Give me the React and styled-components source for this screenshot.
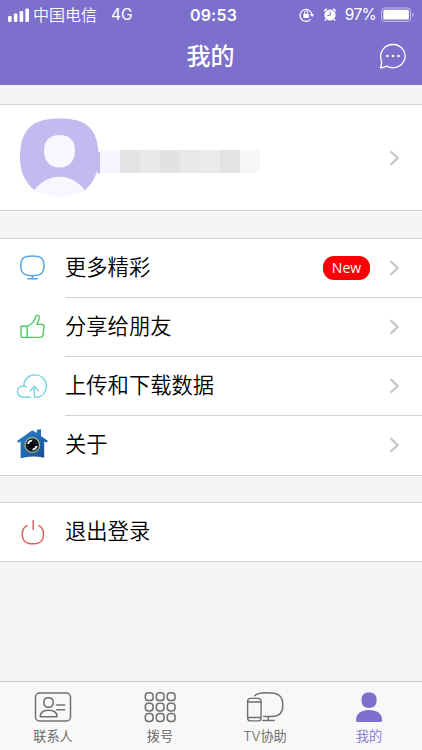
import React from "react";
import styled, { createGlobalStyle } from "styled-components";

const purple = "#7c70cc";
const line = "#d2d2d4";

const GlobalStyle = createGlobalStyle`
  * {
    box-sizing: border-box;
  }
  body {
    margin: 0;
    background: #f5f5f6;
    font-family: "Inter", "Noto Sans CJK SC", sans-serif;
  }
  svg {
    display: block;
    flex: none;
    fill: none;
  }
`;

const Screen = styled.div`
  display: flex;
  flex-direction: column;
  width: 422px;
  height: 750px;
  overflow: hidden;
`;

const Header = styled.header`
  height: 85px;
  flex: none;
  background: ${purple};
  color: #fff;
`;

const StatusBar = styled.div`
  display: grid;
  grid-template-columns: 1fr auto 1fr;
  align-items: center;
  height: 28px;
  padding: 0 7px 0 8px;
  line-height: 28px;
  font-size: 16px;
`;

const StatusLeft = styled.div`
  display: flex;
  align-items: center;
`;

const Carrier = styled.span`
  margin: -1px 14px 0 3px;
  font-family: "Noto Sans CJK SC", sans-serif;
  font-weight: 350;
`;

const Network = styled.span`
  padding-top: 1px;
  font-size: 15.5px;
  font-weight: 400;
`;

const Time = styled.span`
  padding-left: 4px;
  font-size: 16px;
  font-weight: 600;
  letter-spacing: 0.2px;
`;

const StatusRight = styled.div`
  display: flex;
  align-items: center;
  justify-content: flex-end;
`;

const Percent = styled.span`
  margin: 0 5px 0 8px;
  padding-top: 1px;
  font-size: 15.5px;
  letter-spacing: -0.7px;
`;

const NavBar = styled.div`
  display: grid;
  grid-template-columns: 1fr auto 1fr;
  align-items: center;
  height: 56px;
  padding-right: 15px;

  svg {
    justify-self: end;
  }
`;

const Title = styled.h1`
  grid-column: 2;
  margin: -2px 0 0 14px;
  font-family: "Noto Sans CJK SC", sans-serif;
  font-size: 24px;
  font-weight: 500;
  line-height: 56px;
`;

const Panel = styled.section`
  flex: none;
  margin-top: ${(props) => props.$gap}px;
  background: #fff;
  border-top: 1px solid ${line};
  border-bottom: 1px solid ${line};
`;

const Profile = styled.div`
  display: flex;
  align-items: center;
  height: 105px;
  padding: 0 21px 0 20px;
`;

const Mosaic = styled.div`
  display: flex;
  flex: 1;
  margin-top: 8px;
`;

const Block = styled.i`
  width: 20px;
  height: 23px;
  background: ${(props) => props.$color};
`;

const Row = styled.div`
  display: flex;
  align-items: center;
  height: ${(props) => props.$height || 59}px;
  padding-left: 16px;

  > svg {
    margin-top: -1px;
  }
`;

const RowBody = styled.div`
  display: flex;
  flex: 1;
  align-items: center;
  align-self: stretch;
  margin-left: 17px;
  padding-right: 21px;
  border-bottom: ${(props) => (props.$last ? "none" : `1px solid ${line}`)};
`;

const Label = styled.span`
  flex: 1;
  margin-top: -4px;
  color: #000;
  font-family: "Noto Sans CJK SC", sans-serif;
  font-size: 21.3px;
  font-weight: 350;
  line-height: 30px;
`;

const Badge = styled.span`
  width: 47px;
  height: 24px;
  margin-right: 17px;
  border-radius: 11px;
  background: #fb0006;
  color: #fff;
  font-family: "Open Sans", sans-serif;
  font-size: 14px;
  line-height: 24px;
  text-align: center;
`;

const TabBar = styled.nav`
  display: grid;
  grid-template-columns: 106px 108px 102px 106px;
  height: 69px;
  flex: none;
  margin-top: auto;
  border-top: 1px solid #c9c9c9;
  background: #f8f8f8;
`;

const Tab = styled.div`
  display: flex;
  flex-direction: column;
  align-items: center;
  padding-top: 8px;
  color: ${(props) => (props.$active ? purple : "#606060")};
  font-family: "Inter", "Noto Sans CJK SC", sans-serif;
  font-size: 13.2px;
  font-weight: 350;
  line-height: 20px;

  svg {
    margin-bottom: 2px;
  }
`;

const Signal = () => (
  <svg width="22" height="14" viewBox="0 0 22 14" fill="none">
    <g fill="#fff">
      <rect x="0" y="8" width="3.6" height="6" rx="1.2" />
      <rect x="5.8" y="5.5" width="3.6" height="8.5" rx="1.2" />
      <rect x="11.6" y="3" width="3.6" height="11" rx="1.2" />
      <rect x="17.4" y="0.5" width="3.6" height="13.5" rx="1.2" />
    </g>
  </svg>
);

const RotationLock = () => (
  <svg width="16" height="16" viewBox="0 0 16 16">
    <path d="M11.6 12.3A6 6 0 1 1 13 8" stroke="#fff" strokeWidth="1.2" />
    <path d="M10.8 7.3h4.6L13.1 10z" fill="#fff" />
    <rect x="4.4" y="6.7" width="5.4" height="4.4" rx="0.6" fill="#fff" />
    <path d="M5.5 7V5.6a1.6 1.6 0 0 1 3.2 0V7" stroke="#fff" strokeWidth="1" />
  </svg>
);

const AlarmSvg = styled.svg`
  margin-left: 8px;
`;

const Alarm = () => (
  <AlarmSvg width="14" height="16" viewBox="0 0 14 16">
    <circle cx="7" cy="8" r="5.6" fill="#fff" />
    <path d="M1.4 4.4A3 3 0 0 1 4 2M12.6 4.4A3 3 0 0 0 10 2" stroke="#fff" strokeWidth="1.6" />
    <path d="M2.9 12.2l-1 1.5M11.1 12.2l1 1.5" stroke="#fff" strokeWidth="1.5" />
    <path d="M7.2 4.5V8.3H4.3" stroke={purple} strokeWidth="1" />
  </AlarmSvg>
);

const Battery = () => (
  <svg width="34" height="16" viewBox="0 0 34 16">
    <rect x="0.6" y="1" width="29" height="13.4" rx="3.2" stroke="#fff" strokeOpacity="0.55" />
    <rect x="2.3" y="2.8" width="25.6" height="9.8" rx="1.6" fill="#fff" />
    <path d="M31.3 5.5v4.6c1.7-.7 1.7-3.9 0-4.6z" fill="#fff" fillOpacity="0.6" />
  </svg>
);

const Message = () => (
  <svg width="28" height="28" viewBox="0 0 28 28">
    <path
      d="M2 16.8A12.2 11.6 0 1 1 7.7 24.1C5.8 25.1 3.6 25.7 1.4 25.8C2.6 23.2 3 20.4 2 16.8z"
      stroke="#fff"
      strokeWidth="1.3"
      strokeLinejoin="round"
    />
    <g fill="#fff">
      <circle cx="8.4" cy="14" r="1.3" />
      <circle cx="14" cy="14" r="1.3" />
      <circle cx="19.6" cy="14" r="1.3" />
    </g>
  </svg>
);

const Avatar = () => (
  <svg width="80" height="80" viewBox="0 0 80 80">
    <path
      d="M40 .5C67 .5 78.5 11 78.5 39.5C78.5 54 74 64 65 72Q40 79 14 72C5 64 0 54 0 40C0 11 12 .5 40 .5z"
      fill="#c3baf0"
    />
    <path
      d="M39.5 17C49 17 55 22 55 33C55 43 49 49.5 39.5 49.5C30 49.5 24 43 24 33C24 22 30 17 39.5 17z"
      fill="#f8f7ff"
    />
    <path d="M14 72.5C27 54 52 54 65 72.5Q40 86 14 72.5z" fill="#f8f7ff" />
    <path d="M77 34h3v22l-3-1z" fill="#c3baf0" />
  </svg>
);

const Chevron = () => (
  <svg width="14" height="18" viewBox="0 0 14 18">
    <path d="M3.6 2.2L10.6 9L3.6 15.8" stroke="#c5c5ca" strokeWidth="2.3" />
  </svg>
);

const Monitor = () => (
  <svg width="32" height="33" viewBox="0 0 32 33">
    <g stroke="#58a5e4" strokeWidth="1.5">
      <path d="M16.3 4.9C25 4.9 28 7.2 28 14.6C28 22.3 25 24.7 16.3 24.7C7.8 24.7 4.8 22.3 4.8 14.6C4.8 7.2 7.8 4.9 16.3 4.9z" />
      <path d="M16.4 24.7v3M11.2 27.8h10.6" />
    </g>
  </svg>
);

const Thumb = () => (
  <svg width="32" height="33" viewBox="0 0 32 33">
    <g stroke="#4bcb62" strokeWidth="1.4" strokeLinejoin="round">
      <path d="M5 16.2h6.2v11.2H6.4Q5 27.4 5 26z" />
      <path d="M11.2 16.4C15.5 15 19 10.5 19.8 6.4C20.2 4.6 22.9 4.6 23.2 6.9C23.5 9.3 22.1 12 20.8 14.4H25.6Q28.4 14.4 28 17.1L27 25Q26.6 27.4 24.2 27.4H11.2" />
    </g>
  </svg>
);

const CloudUpload = () => (
  <svg width="32" height="33" viewBox="0 0 32 33">
    <g stroke="#75d4e2" strokeWidth="1.4" strokeLinecap="round">
      <path d="M14 28.3H7.5C3.8 28.3 1.4 25.7 1.4 22.6C1.4 19.3 4 17 7.2 17C8.3 17 9.4 17.3 10.4 18.1" />
      <path d="M7.7 16.8C7.8 10.5 12.7 5.9 18.9 5.9C25.8 5.9 30.5 11 30.5 17C30.5 23 26.2 28.3 20.2 28.3Q18.3 28.3 18.3 26.4V18" />
      <path d="M14.1 21.7L18.3 17.5L22.5 21.7" />
    </g>
  </svg>
);

const House = () => (
  <svg width="32" height="33" viewBox="0 0 32 33">
    <defs>
      <linearGradient id="wall" x1="0" y1="0" x2="1" y2="1">
        <stop offset="0" stopColor="#2b83cf" />
        <stop offset="0.55" stopColor="#1f67b0" />
        <stop offset="1" stopColor="#174a8c" />
      </linearGradient>
    </defs>
    <path
      d="M1 13L16.3 2.2L20.8 5V1.8L25 1.2V8L32 13L30.5 14.5L28.2 13.4V29.7Q16 27.3 4.6 30.2V13.8L2.3 14.8z"
      fill="url(#wall)"
    />
    <circle cx="16.3" cy="17" r="7.3" fill="#111725" stroke="#b2b678" strokeWidth="1.2" />
    <circle cx="16.3" cy="17" r="3.5" fill="#08090e" />
    <path d="M11 16C11.5 13 13.8 11.5 16.7 11.7L15.2 13.9L13.8 14.3L13.3 16z" fill="#e8f1f6" />
    <path d="M21.6 18C21.1 21 18.8 22.5 15.9 22.3L17.4 20.1L18.8 19.7L19.3 18z" fill="#e8f1f6" />
  </svg>
);

const Power = () => (
  <svg width="32" height="33" viewBox="0 0 32 33">
    <g stroke="#dd625f" strokeWidth="1.5" strokeLinecap="round">
      <path d="M17.2 5.4v9.2" />
      <path d="M11 10.6C7.8 12.2 6.3 15 6.3 19C6.3 26 9.5 28.8 16.9 28.8C24.3 28.8 27.5 26 27.5 19C27.5 15 26 12.2 23 10.6" />
    </g>
  </svg>
);

const ContactIcon = () => (
  <svg width="38" height="34" viewBox="0 0 38 34">
    <g stroke="#707070" strokeWidth="1.5">
      <rect x="1.5" y="3" width="35" height="28" rx="4" />
      <path d="M14.4 7.7C17.7 7.7 19.2 9.3 19.2 12.3C19.2 15.4 17.6 17.3 14.4 17.3C11.3 17.3 9.8 15.4 9.8 12.3C9.8 9.3 11.3 7.7 14.4 7.7z" />
      <path d="M6.3 26.8C6.3 22 10 20.3 14.5 20.3C19.2 20.3 23 22 23 26.8z" strokeLinejoin="round" />
      <path d="M22.2 14.9h9M22.2 19.8h9" />
    </g>
  </svg>
);

const DialIcon = () => (
  <svg width="34" height="34" viewBox="0 0 34 34">
    <g stroke="#707070" strokeWidth="1.5">
      {[6.7, 17.1, 27.5].map((y) =>
        [6.2, 17.2, 28.2].map((x) => (
          <rect key={`${x}-${y}`} x={x - 3.9} y={y - 3.9} width="7.8" height="7.8" rx="3.2" />
        ))
      )}
    </g>
  </svg>
);

const TvIcon = () => (
  <svg width="40" height="34" viewBox="0 0 40 34">
    <g stroke="#707070" strokeWidth="1.4">
      <rect x="2.6" y="8.4" width="13.5" height="22.5" rx="3" />
      <path d="M2.6 12h13.5M2.6 27.5h13.5" />
      <path d="M9.5 6.3C10.8 3.6 15 2.8 21.5 2.8C32.5 2.8 37.8 4.8 37.8 15.2C37.8 23.5 34 26.5 27 26.5H18.2" />
      <path d="M23.3 26.5v4M17.2 30.5h12.5" />
    </g>
  </svg>
);

const MineIcon = () => (
  <svg width="34" height="34" viewBox="0 0 34 34">
    <g fill={purple}>
      <path d="M17 2.4C22 2.4 24.6 5 24.6 9.9C24.6 15 22 17.9 17 17.9C12 17.9 9.5 15 9.5 9.9C9.5 5 12 2.4 17 2.4z" />
      <path d="M4 30.3C4 23.5 9.5 20.1 17 20.1C24.6 20.1 30.1 23.5 30.1 30.3Q30.1 32 28.4 32H5.7Q4 32 4 30.3z" />
    </g>
  </svg>
);

const menu = [
  { label: "更多精彩", icon: <Monitor />, badge: "New" },
  { label: "分享给朋友", icon: <Thumb /> },
  { label: "上传和下载数据", icon: <CloudUpload /> },
  { label: "关于", icon: <House /> },
];

const tabs = [
  { label: "联系人", icon: <ContactIcon /> },
  { label: "拨号", icon: <DialIcon /> },
  { label: "TV协助", icon: <TvIcon /> },
  { label: "我的", icon: <MineIcon />, active: true },
];

const mosaic = ["#f7f6fe", "#e3e3e3", "#e9e9e9", "#e2e2e2", "#e8e8e8", "#ebebeb", "#e3e3e3", "#f7f7f7"];

export default function App() {
  return (
    <Screen>
      <GlobalStyle />
      <Header>
        <StatusBar>
          <StatusLeft>
            <Signal />
            <Carrier>中国电信</Carrier>
            <Network>4G</Network>
          </StatusLeft>
          <Time>09:53</Time>
          <StatusRight>
            <RotationLock />
            <Alarm />
            <Percent>97%</Percent>
            <Battery />
          </StatusRight>
        </StatusBar>
        <NavBar>
          <Title>我的</Title>
          <Message />
        </NavBar>
      </Header>

      <Panel $gap={19}>
        <Profile>
          <Avatar />
          <Mosaic>
            {mosaic.map((color, i) => (
              <Block key={i} $color={color} />
            ))}
          </Mosaic>
          <Chevron />
        </Profile>
      </Panel>

      <Panel $gap={26.5}>
        {menu.map((item, i) => (
          <Row key={item.label}>
            {item.icon}
            <RowBody $last={i === menu.length - 1}>
              <Label>{item.label}</Label>
              {item.badge && <Badge>{item.badge}</Badge>}
              <Chevron />
            </RowBody>
          </Row>
        ))}
      </Panel>

      <Panel $gap={26.5}>
        <Row $height={58}>
          <Power />
          <RowBody $last>
            <Label>退出登录</Label>
          </RowBody>
        </Row>
      </Panel>

      <TabBar>
        {tabs.map((tab) => (
          <Tab key={tab.label} $active={tab.active}>
            {tab.icon}
            {tab.label}
          </Tab>
        ))}
      </TabBar>
    </Screen>
  );
}
